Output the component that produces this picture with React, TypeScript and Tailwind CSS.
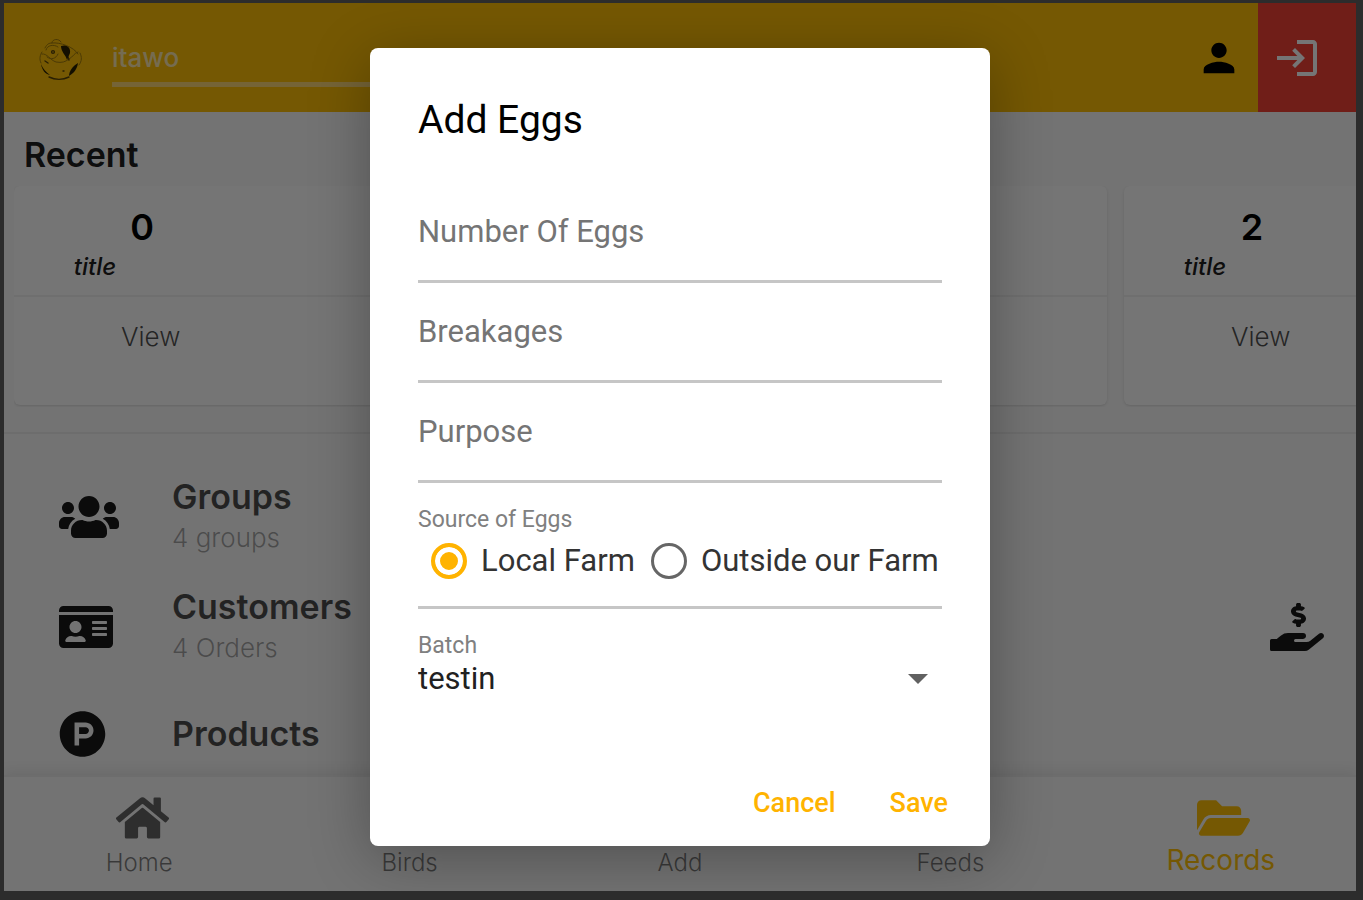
import { useState } from "react";
import {
  FaDove,
  FaFolderOpen,
  FaHandHoldingUsd,
  FaHome,
  FaIdCard,
  FaPlusCircle,
  FaProductHunt,
  FaSeedling,
  FaUsers,
} from "react-icons/fa";
import { MdArrowDropDown, MdLogin, MdPerson } from "react-icons/md";

const cards = [
  { count: 0, label: "title" },
  { count: 1, label: "title" },
  { count: 2, label: "title" },
];

const records = [
  { name: "Groups", detail: "4 groups", icon: FaUsers, size: "w-[60px]" },
  {
    name: "Customers",
    detail: "4 Orders",
    icon: FaIdCard,
    size: "w-[54px]",
    trailing: true,
  },
  { name: "Products", icon: FaProductHunt, size: "w-[47px]" },
];

const tabs = [
  { name: "Home", icon: FaHome },
  { name: "Birds", icon: FaDove },
  { name: "Add", icon: FaPlusCircle },
  { name: "Feeds", icon: FaSeedling },
  { name: "Records", icon: FaFolderOpen, active: true },
];

const Logo = () => (
  <svg viewBox="0 0 46 46" className="size-[46px] shrink-0" fill="none">
    <g stroke="#a37c0c" strokeWidth="1" strokeLinecap="round">
      <path d="M9 13c2-4 4-5 7-5 0-4 7-5 9-1M16 8c8-1 22 4 26 11" />
      <path d="M6 17c-2 3-3 7-1 11M44 18c2 4 2 8-1 12" />
      <path d="M6 19c5-1 8 6 14 8 6 1 9 0 13-3 4-2 5-6 9-7" />
      <path d="M11 22c4 3 9 2 11-3M10 15c1-5 8-6 12-3" />
    </g>
    <g stroke="#5a4408" strokeWidth="1.4" strokeLinecap="round">
      <path d="M13 42c6 3 14 3 20 0" />
      <path d="M27 36h1M32 22l1 3M9 26l3 2" />
      <circle cx="17" cy="17" r="1.4" />
    </g>
    <path d="M25 11c5-2 10 1 9 7l-3 7c-1-5-6-8-6-14Z" fill="#2b2200" />
    <path d="M42 28c-1 6-4 10-9 13 0-5 4-10 9-13Z" fill="#2b2200" />
    <path d="M5 29c2 5 5 8 9 11-5-1-8-5-9-11Z" fill="#2b2200" />
  </svg>
);

const Header = () => (
  <header className="flex h-[109px] shrink-0 items-center bg-[#ffc107] pt-px pl-8">
    <Logo />
    <input
      aria-label="Farm"
      defaultValue="itawo"
      className="ml-[30px] w-1/2 border-b-[5px] border-[#ffe3a8]/70 bg-transparent pt-3 pb-2 text-[26px] leading-8 font-medium text-white/70 outline-none"
    />
    <button aria-label="Profile" className="mr-4 ml-auto text-black">
      <MdPerson className="size-[46px]" />
    </button>
    <button
      aria-label="Log out"
      className="-mt-px flex h-[109px] w-[98px] items-center bg-[#f44336] pl-[15px] text-white"
    >
      <MdLogin className="size-12" />
    </button>
  </header>
);

const Recent = () => (
  <section className="shrink-0 border-b-2 border-black/5 pt-[21px] pb-[25px] pl-[10px]">
    <h2 className="pl-[10px] text-[34px] leading-[44px] font-semibold text-black/90">
      Recent
    </h2>
    <div className="mt-[9px] flex gap-[17px] overflow-hidden pb-[2px]">
      {cards.map((card) => (
        <article
          key={card.count}
          className="h-[219px] w-[538px] shrink-0 rounded-md bg-white shadow"
        >
          <div className="h-[111px] border-b-2 border-black/5 pt-[15px]">
            <p className="w-64 text-center text-[36px] leading-[52px] font-semibold text-black">
              {card.count}
            </p>
            <p className="w-[162px] text-center text-2xl leading-7 font-medium text-black/90 italic">
              {card.label}
            </p>
          </div>
          <button className="ml-[107px] pt-[22px] text-[26px] leading-9 font-light text-black/70">
            View
          </button>
        </article>
      ))}
    </div>
  </section>
);

const Records = () => (
  <section className="min-h-0 flex-1 overflow-hidden pt-7">
    <ul>
      {records.map(({ name, detail, icon: Icon, size, trailing }) => (
        <li
          key={name}
          className={`flex items-center pr-8 pl-[55px] ${detail ? "h-[110px]" : "h-[104px]"}`}
        >
          <div className="w-[113px]">
            <Icon className={`h-12 text-black/90 ${size}`} />
          </div>
          <div>
            <h3 className="text-[34px] leading-[42px] font-semibold text-black/70">
              {name}
            </h3>
            {detail && (
              <p className="text-[26px] leading-10 font-light text-black/35">
                {detail}
              </p>
            )}
          </div>
          {trailing && (
            <FaHandHoldingUsd className="ml-auto h-12 w-[54px] text-black/90" />
          )}
        </li>
      ))}
    </ul>
  </section>
);

const BottomNav = () => (
  <nav className="grid h-[116px] shrink-0 grid-cols-5 border-t-2 border-black/5 shadow-[0_-4px_12px_rgba(0,0,0,0.08)]">
    {tabs.map(({ name, icon: Icon, active }) => (
      <a
        key={name}
        href={`#${name.toLowerCase()}`}
        className={`flex flex-col items-center pt-[17px] ${
          active
            ? "text-[28px] text-[#ffc107]"
            : "text-2xl font-light text-black/50"
        }`}
      >
        <Icon
          className={`ml-[6px] h-12 w-[53px] ${active ? "text-[#ffc107]" : "text-black/60"}`}
        />
        <span className={active ? "leading-9" : "leading-[42px]"}>{name}</span>
      </a>
    ))}
  </nav>
);

const TextField = ({ label }: { label: string }) => (
  <input
    aria-label={label}
    placeholder={label}
    className="h-[100px] w-full border-b-[3px] border-[#c6c6c6] text-[31px] text-[#212121] outline-none placeholder:text-[#757575]"
  />
);

const AddEggs = () => {
  const [source, setSource] = useState("Local Farm");

  return (
    <form
      role="dialog"
      aria-labelledby="add-eggs"
      className="flex w-[620px] flex-col rounded-lg bg-white px-12 pt-12 pb-[18px] font-[Roboto,sans-serif] shadow-[0_12px_60px_rgba(0,0,0,0.3)]"
    >
      <h1 id="add-eggs" className="mb-[38px] text-[39px] leading-[49px] text-black">
        Add Eggs
      </h1>
      <TextField label="Number Of Eggs" />
      <TextField label="Breakages" />
      <TextField label="Purpose" />
      <fieldset className="h-[126px] border-b-[3px] border-[#c6c6c6] pt-[23px]">
        <legend className="float-left w-full text-[23px] leading-7 text-[#808080]">
          Source of Eggs
        </legend>
        <div className="flex items-center gap-4 pt-[9px] pl-[13px]">
          {["Local Farm", "Outside our Farm"].map((option) => (
            <label
              key={option}
              className="flex items-center gap-[14px] text-[31px] leading-9 whitespace-nowrap text-[#333]"
            >
              <input
                type="radio"
                name="source"
                checked={source === option}
                onChange={() => setSource(option)}
                className="size-9 appearance-none rounded-full border-[3px] border-[#666] checked:border-4 checked:border-[#ffb300] checked:bg-[#ffb300] checked:shadow-[inset_0_0_0_5px_white]"
              />
              {option}
            </label>
          ))}
        </div>
      </fieldset>
      <div className="relative pt-[23px]">
        <label
          htmlFor="batch"
          className="block text-[23px] leading-7 text-[#808080]"
        >
          Batch
        </label>
        <select
          id="batch"
          className="block h-[38px] w-full appearance-none text-[31px] leading-9 text-[#212121] outline-none"
        >
          <option>testin</option>
        </select>
        <MdArrowDropDown className="pointer-events-none absolute right-0 -bottom-1 size-12 text-[#616161]" />
      </div>
      <div className="-mr-[6px] mt-20 flex justify-end gap-[54px] text-[27px] leading-[50px] font-medium text-[#ffb300]">
        <button type="button">Cancel</button>
        <button type="button">Save</button>
      </div>
    </form>
  );
};

export default function App() {
  return (
    <div className="h-screen bg-[#2c2c2c] pt-[3px] pr-[7px] pb-[9px] pl-1">
      <div className="relative h-full overflow-hidden">
        <div className="flex h-full flex-col bg-[#fafafa] font-[Inter,sans-serif]">
          <Header />
          <Recent />
          <Records />
          <BottomNav />
        </div>
        <div className="absolute inset-0 flex items-center justify-center bg-black/54">
          <AddEggs />
        </div>
      </div>
    </div>
  );
}
